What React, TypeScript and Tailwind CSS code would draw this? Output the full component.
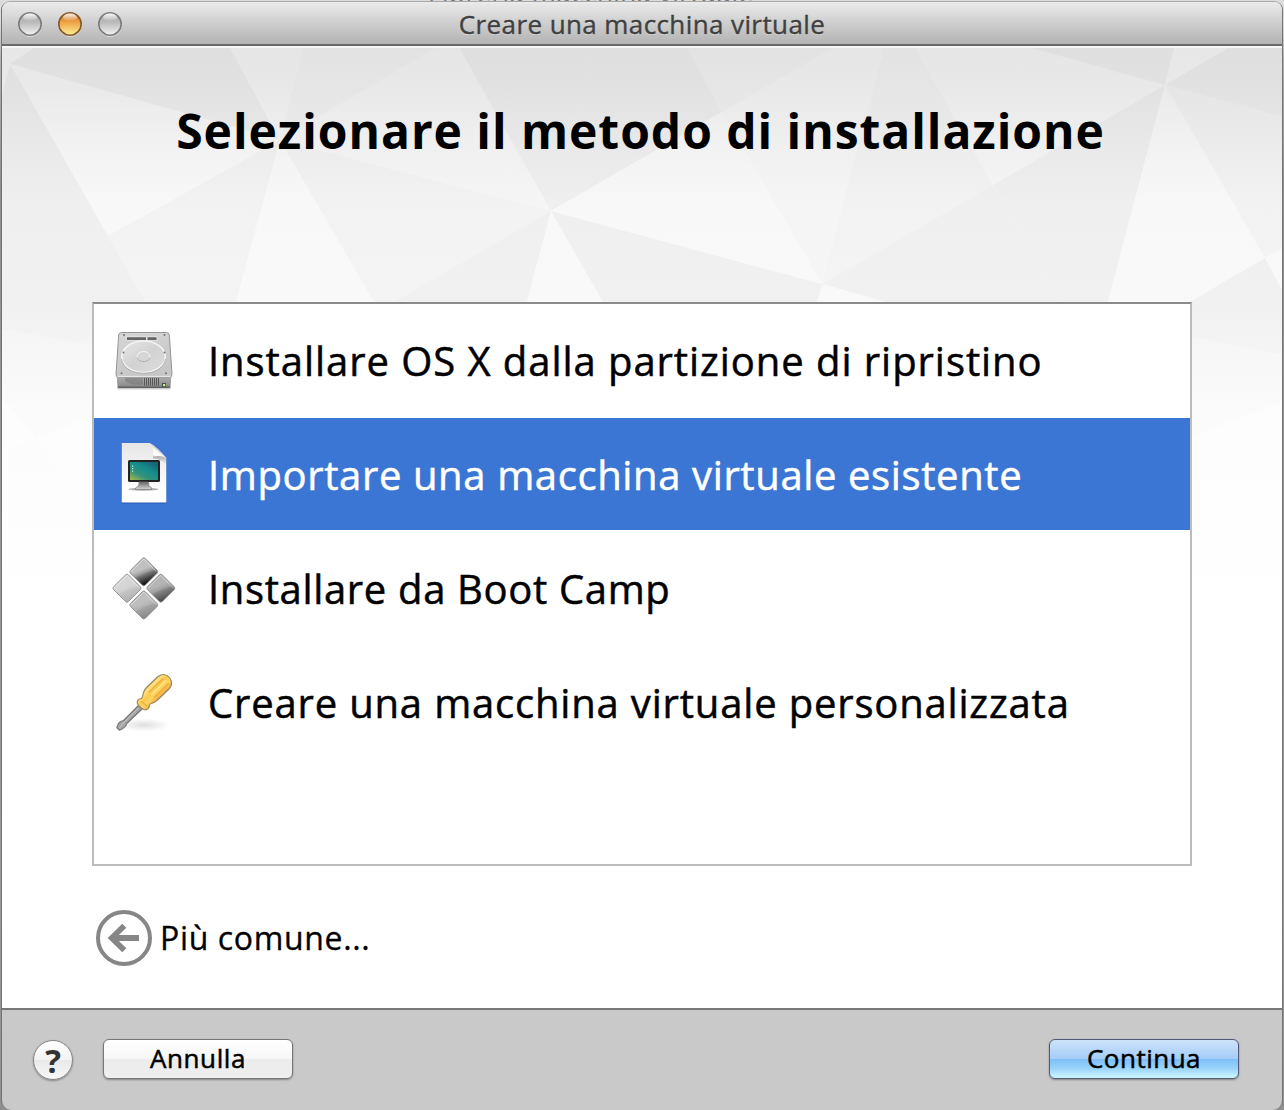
import type { ReactNode } from "react";

type Tone = "light" | "soft" | "mid" | "dark";

// Facets of the paper-fold backdrop; coordinates are in the content pane's own space.
const facets: [Tone, string][] = [
  ["dark", "38,-2 226,-2 278,94 8,18"],
  ["soft", "226,-2 302,-2 278,94"],
  ["mid", "302,-2 440,-2 278,94"],
  ["soft", "440,-2 455,-2 549,165 278,94"],
  ["light", "8,18 278,94 106,190"],
  ["dark", "0,50 8,18 106,190 0,254"],
  ["mid", "106,190 278,94 234,256 144,256"],
  ["dark", "106,190 144,256 0,400 0,252"],
  ["light", "278,94 372,256 234,256"],
  ["mid", "278,94 549,165 394,256 372,256"],
  ["dark", "549,165 525,256 392,256"],
  ["light", "549,165 525,256 603,256"],
  ["dark", "549,165 820,238 815,256 601,256"],
  ["dark", "455,-2 592,-2 549,165"],
  ["dark", "592,-2 683,-2 720,66 549,165"],
  ["mid", "683,-2 838,-2 720,66"],
  ["light", "549,165 720,66 820,238"],
  ["soft", "720,66 838,-2 883,-2 820,238"],
  ["mid", "883,-2 911,-2 991,139 820,238"],
  ["soft", "911,-2 1015,-2 1163,39 991,139"],
  ["dark", "1015,-2 1173,-2 1163,39"],
  ["light", "1173,-2 1233,-2 1163,39"],
  ["dark", "1233,-2 1280,-2 1280,71 1163,39"],
  ["mid", "1163,39 1280,71 1280,203 1263,212"],
  ["dark", "820,238 991,139 1058,256 884,256"],
  ["dark", "991,139 1163,39 1106,256 1058,256"],
  ["light", "1163,39 1263,212 1188,256 1106,256"],
  ["light", "1263,212 1280,203 1280,244"],
  ["dark", "1263,212 1280,244 1280,309 1190,291 1188,256"],
  ["dark", "0,252 90,256 90,299 0,283"],
  ["mid", "0,283 90,299 90,370 35,392 0,352"],
  ["light", "0,352 35,392 0,405"],
  ["soft", "0,405 35,392 90,459 90,504 0,489"],
  ["light", "35,392 90,370 90,459"],
  ["mid", "1190,291 1280,309 1280,355 1190,390"],
];

const toneFill: Record<Tone, string> = {
  light: "url(#tone-light)",
  soft: "url(#tone-soft)",
  mid: "url(#tone-mid)",
  dark: "url(#tone-dark)",
};

const toneStops: Record<Tone, string[]> = {
  light: ["#e7e7e7", "#e9e9e9", "#f1f1f1", "#f8f8f8", "#f9f9f9", "#fdfdfd", "#ffffff"],
  soft: ["#e5e5e5", "#e8e8e8", "#efefef", "#f5f5f5", "#f6f6f6", "#fcfcfc", "#ffffff"],
  mid: ["#e2e2e2", "#e5e5e5", "#ebebeb", "#f2f2f2", "#f4f4f4", "#fbfbfb", "#ffffff"],
  dark: ["#dfdfdf", "#e1e1e1", "#e8e8e8", "#efefef", "#f1f1f1", "#fafafa", "#ffffff"],
};
const offsets = ["0", "0.06", "0.15", "0.25", "0.42", "0.6", "0.95"];

function Backdrop() {
  return (
    <svg className="absolute inset-0" width="1280" height="640" viewBox="0 0 1280 640" aria-hidden="true">
      <defs>
        {(Object.keys(toneStops) as Tone[]).map((t) => (
          <linearGradient key={t} id={`tone-${t}`} gradientUnits="userSpaceOnUse" x1="0" y1="0" x2="0" y2="620">
            {toneStops[t].map((c, i) => (
              <stop key={i} offset={offsets[i]} stopColor={c} />
            ))}
          </linearGradient>
        ))}
      </defs>
      <rect width="1280" height="640" fill="url(#tone-light)" />
      {facets.map(([tone, points], i) => (
        <polygon key={i} points={points} fill={toneFill[tone]} />
      ))}
      <rect width="1280" height="2" fill="#f6f6f6" />
    </svg>
  );
}

function TrafficLight({ amber = false }: { amber?: boolean }) {
  const id = amber ? "amber" : "grey";
  return (
    <svg width="26" height="26" viewBox="0 0 26 26" aria-hidden="true">
      <defs>
        <linearGradient id={`tl-${id}`} x1="0" y1="0" x2="0" y2="1">
          <stop offset="0" stopColor={amber ? "#c66d20" : "#a5a5a5"} />
          <stop offset="0.45" stopColor={amber ? "#f0a648" : "#bcbcbc"} />
          <stop offset="0.75" stopColor={amber ? "#f6d072" : "#dadada"} />
          <stop offset="1" stopColor={amber ? "#f9f29c" : "#f4f4f4"} />
        </linearGradient>
        <linearGradient id={`shine-${id}`} x1="0" y1="0" x2="0" y2="1">
          <stop offset="0" stopColor="#fff" stopOpacity="0.95" />
          <stop offset="1" stopColor="#fff" stopOpacity="0.05" />
        </linearGradient>
      </defs>
      <circle cx="13" cy="14.3" r="11.7" fill="#fff" opacity="0.5" />
      <circle cx="13" cy="13" r="11.2" fill={`url(#tl-${id})`} stroke={amber ? "#85592c" : "#7c7c7c"} strokeWidth="1.6" />
      <ellipse cx="13" cy="6.2" rx="7" ry="3.6" fill={`url(#shine-${id})`} />
    </svg>
  );
}

function DriveIcon() {
  return (
    <svg width="64" height="64" viewBox="0 0 64 64" aria-hidden="true">
      <defs>
        <linearGradient id="drv-top" x1="0" y1="0" x2="0.4" y2="1">
          <stop offset="0" stopColor="#d6d6d6" />
          <stop offset="1" stopColor="#c6c6c6" />
        </linearGradient>
        <linearGradient id="drv-front" x1="0" y1="0" x2="0" y2="1">
          <stop offset="0" stopColor="#b4b4b4" />
          <stop offset="0.8" stopColor="#8f8f8f" />
          <stop offset="1" stopColor="#555" />
        </linearGradient>
        <linearGradient id="drv-disc" x1="0" y1="0" x2="1" y2="1">
          <stop offset="0" stopColor="#e8e8e8" />
          <stop offset="0.5" stopColor="#d2d2d2" />
          <stop offset="1" stopColor="#dedede" />
        </linearGradient>
      </defs>
      <rect x="5" y="58" width="54" height="3.5" rx="1.7" fill="#000" opacity="0.2" />
      <path d="M4.500 47H59.500L58.500 58.500Q58.300 60 56.800 60H7.200Q5.700 60 5.500 58.500Z" fill="url(#drv-front)" />
      <path d="M9.500 4.500H54.500Q57 4.500 57.300 7L60 46Q60 49 58 49H6Q4 49 4 46L6.700 7Q7 4.500 9.500 4.500Z" fill="url(#drv-top)" stroke="#959595" strokeWidth="1" />
      <path d="M5.500 48.400H58.500" stroke="#ededed" strokeWidth="1" />
      <path d="M14.500 8H45.500V13H14.500Z" fill="#dedede" />
      <path d="M15 9.200H34V12H15ZM35.500 9.200H44.500V12H35.500Z" fill="#646464" />
      <circle cx="51.500" cy="32" r="3.500" fill="#dcdcdc" stroke="#bbb" strokeWidth=".7" />
      <ellipse cx="31.500" cy="28.800" rx="21.800" ry="15.800" fill="url(#drv-disc)" stroke="#f6f6f6" strokeWidth="1.500" />
      <path d="M9.500 31C12 50 51 50 53.500 31" fill="none" stroke="#aaa" strokeWidth=".9" />
      <ellipse cx="31.500" cy="28.500" rx="6.500" ry="5" fill="#d6d6d6" stroke="#f6f6f6" />
      <path d="M25 29.500Q27 34 33 33.500Q37 32.800 38 29.500" fill="none" stroke="#a2a2a2" strokeWidth=".9" />
      {[[12, 7], [52.5, 7], [11.5, 24.500], [52.5, 24.500], [9.500, 45.300], [54, 45.300]].map(([x, y]) => (
        <circle key={`${x}-${y}`} cx={x} cy={y} r="1" fill="#747474" />
      ))}
      <path d="M13 50H31V56.500Q20 58 13 53Z" fill="#707070" opacity=".5" />
      {[32.5, 34.500, 36.500, 38.500, 40.500, 42.500, 44.500, 46.500].map((x) => (
        <path key={x} d={`M${x} 50V57.500`} stroke="#565656" strokeWidth="1" />
      ))}
      <rect x="50" y="55" width="4" height="4" fill="#4b4b4b" />
      <rect x="51" y="56" width="2.200" height="2.200" fill="#b7f78b" />
    </svg>
  );
}

function ImportIcon() {
  return (
    <svg width="64" height="64" viewBox="0 0 64 64" aria-hidden="true">
      <defs>
        <linearGradient id="doc" x1="0" y1="0" x2="0" y2="1">
          <stop offset="0" stopColor="#e6e6e6" />
          <stop offset="0.8" stopColor="#ffffff" />
        </linearGradient>
        <linearGradient id="screen" x1="0" y1="1" x2="0.8" y2="0">
          <stop offset="0" stopColor="#a9b94e" />
          <stop offset="0.35" stopColor="#33927c" />
          <stop offset="0.65" stopColor="#168d8b" />
          <stop offset="1" stopColor="#176575" />
        </linearGradient>
        <linearGradient id="curl" gradientUnits="userSpaceOnUse" x1="42" y1="14" x2="47.500" y2="7.500">
          <stop offset="0" stopColor="#ffffff" />
          <stop offset="0.6" stopColor="#fafafa" />
          <stop offset="1" stopColor="#bdbdbd" />
        </linearGradient>
        <linearGradient id="fold-shade" x1="0" y1="0" x2="0" y2="1">
          <stop offset="0" stopColor="#555" stopOpacity="0.5" />
          <stop offset="1" stopColor="#555" stopOpacity="0" />
        </linearGradient>
        <linearGradient id="stand" x1="0" y1="0" x2="0" y2="1">
          <stop offset="0" stopColor="#666" />
          <stop offset="1" stopColor="#d8d8d8" />
        </linearGradient>
      </defs>
      <path d="M9 1.500H38L54.500 17V61.500H9Z" fill="#123a80" opacity="0.45" />
      <path d="M9.700 1H37Q41 1.500 54.300 16V60.500H9.700Z" fill="url(#doc)" />
      <path d="M41 13H50L54.300 16.500V22Q48 17 41 16.500Z" fill="url(#fold-shade)" />
      <path d="M37.500 1Q42.500 5 41.300 14.500Q49 12.800 54.500 16.300Q45 4.500 37.500 1Z" fill="url(#curl)" />
      <rect x="16" y="18" width="32" height="22" rx="1.500" fill="#202224" />
      <rect x="18" y="20" width="28" height="18" fill="url(#screen)" />
      <path d="M20 23.500h1.200v1.200h-1.200zM20 26h1.200v1.200h-1.200zM20 28.500h1.200v1.200h-1.200z" fill="#d2f4df" />
      <ellipse cx="31.500" cy="47.200" rx="15" ry="1.500" fill="#777" opacity=".6" />
      <path d="M27 40H36.500Q36 44 39.500 46V47.500H23.500V46Q28 44 27 40Z" fill="url(#stand)" stroke="#777" strokeWidth=".7" />
    </svg>
  );
}

function BootCampIcon() {
  const tiles: [number, number, string][] = [
    [31.8, 15.800, "bc-black"],
    [15, 32.200, "bc-pale"],
    [48.800, 32.200, "bc-dark"],
    [31.8, 49, "bc-mid"],
  ];
  const ends: [string, string, string][] = [
    ["bc-black", "#b6b6b6", "#141414"],
    ["bc-pale", "#d0d0d0", "#b2b2b2"],
    ["bc-dark", "#a8a8a8", "#4e4e4e"],
    ["bc-mid", "#b4b4b4", "#8a8a8a"],
  ];
  return (
    <svg width="64" height="64" viewBox="0 0 64 64" aria-hidden="true">
      <defs>
        {ends.map(([id, a, b]) => (
          <linearGradient key={id} id={id} x1="0.3" y1="0.1" x2="0.62" y2="0.9">
            <stop offset="0" stopColor={a} />
            <stop offset="0.4" stopColor={a} />
            <stop offset="1" stopColor={b} />
          </linearGradient>
        ))}
      </defs>
      {tiles.map(([x, y, id]) => (
        <g key={id} transform={`translate(${x} ${y})`}>
          <path d="M-1.500-13.300Q0-14.800 1.500-13.300L13.300-1.500Q14.800 0 13.300 1.500L1.500 13.300Q0 14.800-1.500 13.300L-13.300 1.500Q-14.800 0-13.300-1.500Z" fill={`url(#${id})`} stroke="#8f8f8f" strokeWidth=".9" />
          <path d="M-12.800 0L0-12.800L12.800 0" fill="none" stroke="#fff" strokeOpacity=".5" strokeWidth=".9" />
          <path d="M0-13.500L11.500-2Q2 0-8 6L-14 0Z" fill="#fff" opacity=".14" />
        </g>
      ))}
    </svg>
  );
}

function ScrewdriverIcon() {
  return (
    <svg width="64" height="64" viewBox="0 0 64 64" aria-hidden="true">
      <defs>
        <linearGradient id="handle" gradientUnits="userSpaceOnUse" x1="34" y1="13" x2="49" y2="28">
          <stop offset="0" stopColor="#f3c750" />
          <stop offset="0.3" stopColor="#ffe07a" />
          <stop offset="0.5" stopColor="#fbc850" />
          <stop offset="0.7" stopColor="#ffd560" />
          <stop offset="1" stopColor="#f2a238" />
        </linearGradient>
        <radialGradient id="sd-shadow">
          <stop offset="0" stopColor="#000" stopOpacity="0.13" />
          <stop offset="1" stopColor="#000" stopOpacity="0" />
        </radialGradient>
      </defs>
      <ellipse cx="32" cy="55" rx="26" ry="6.500" fill="url(#sd-shadow)" />
      <path d="M26.500 35.500L30 39L14.800 53.500Q14 57.500 7.500 60.300L4.800 57.500Q6.500 51 11.500 50.500Z" fill="#a3a3a3" stroke="#777" strokeWidth="1.100" strokeLinejoin="round" />
      <path d="M27 37.500L12 52.500L7.500 57.500" fill="none" stroke="#cdcdcd" strokeWidth="1" />
      <path d="M28 37Q24.300 33.500 25.500 31Q26.500 28.500 29.500 28.500Q31 26 31.500 22.500Q32.500 19.500 35 17L46 6.500Q49 4.300 52 4.500Q55.500 5 57.800 8Q60 11 59.500 14.500Q59 17 57 19L45 30.500Q42.500 32.500 39.500 33.500Q37.500 34 37.300 35.500Q37.500 38 35.500 39Q33.500 40.500 31.500 39.500Z" fill="url(#handle)" stroke="#998868" strokeWidth="1.200" />
      <path d="M37 22L50.500 9M42.500 27L56 14" stroke="#e8952c" strokeOpacity=".6" strokeWidth="1.600" strokeLinecap="round" />
      <path d="M40 24L53.500 11" stroke="#ffe98c" strokeWidth="1.500" strokeLinecap="round" />
      <path d="M29.500 31.500L35 36" stroke="#eaa137" strokeOpacity=".7" strokeWidth="1.300" />
    </svg>
  );
}

function Row({ icon, spacing, selected = false, children }: { icon: ReactNode; spacing: string; selected?: boolean; children: ReactNode }) {
  return (
    <li className={`flex h-28 items-center gap-8 pl-[18px] ${selected ? "bg-[#3c76d4] text-white" : "text-black"}`}>
      <span className="size-16 shrink-0">{icon}</span>
      <span className={`whitespace-nowrap pt-px text-[40px] leading-none [-webkit-text-stroke:0.5px_currentColor] ${spacing}`}>{children}</span>
    </li>
  );
}

export default function App() {
  return (
    <div className="relative flex h-[1110px] w-[1284px] flex-col overflow-hidden bg-[linear-gradient(#dcdcdc_0,#dcdcdc_20px,#b0b0b0_60px,#8f8f8f_180px,#999_900px,#8f8f8f)] px-[1px] pt-[1px] font-['Open_Sans',sans-serif]">
      <div className="absolute left-[428px] top-0 h-[2px] w-[340px] overflow-hidden">
        <span className="absolute bottom-[-8px] left-0 whitespace-nowrap text-[26px] leading-[34px] tracking-[0.45px] text-[#777]">Libreria macchina virtuale</span>
      </div>
      <main className="relative flex min-h-0 flex-1 flex-col overflow-hidden rounded-t-[9px] rounded-b-[10px] border-x border-t border-x-[#747474] border-t-[#a8a8a8]">
        <header className="relative flex h-[44px] shrink-0 items-center justify-center border-b-2 border-[#69696b] bg-linear-to-b from-[#ebebeb] to-[#b3b3b3]">
          <div className="absolute left-[15px] top-[9px] flex gap-[14px]">
            <TrafficLight />
            <TrafficLight amber />
            <TrafficLight />
          </div>
          <h1 className="pt-px text-[26px] leading-none tracking-[0.4px] text-[#404040] [-webkit-text-stroke:0.4px_currentColor] [text-shadow:0_1px_0_rgba(255,255,255,0.5)]">Creare una macchina virtuale</h1>
        </header>
        <section className="relative flex min-h-0 flex-1 flex-col bg-white px-[90px]">
          <Backdrop />
          <h2 className="relative mt-[53px] h-[64px] whitespace-nowrap pr-[3px] text-center text-[48px] font-bold leading-[64px] tracking-[0.95px] text-black">Selezionare il metodo di installazione</h2>
          <ul className="relative mt-[139px] flex h-[564px] flex-col gap-[2px] border-2 border-[#bcbcbc] border-t-[#8b8b8b] bg-white">
            <Row icon={<DriveIcon />} spacing="tracking-[0.94px]">Installare OS X dalla partizione di ripristino</Row>
            <Row icon={<ImportIcon />} spacing="tracking-[0.62px]" selected>Importare una macchina virtuale esistente</Row>
            <Row icon={<BootCampIcon />} spacing="tracking-[0.65px]">Installare da Boot Camp</Row>
            <Row icon={<ScrewdriverIcon />} spacing="tracking-[0.82px]">Creare una macchina virtuale personalizzata</Row>
          </ul>
          <button className="relative mt-[44px] flex items-center gap-[8px] self-start pl-1">
            <svg width="56" height="56" viewBox="0 0 56 56" fill="none" stroke="#868686" aria-hidden="true">
              <circle cx="28" cy="28" r="26" strokeWidth="4" />
              <path d="M28.300 15.700L15.800 28L28.300 40.300M17 28H43" strokeWidth="5.800" />
            </svg>
            <span className="text-[32px] leading-none tracking-[0.65px] [-webkit-text-stroke:0.3px_currentColor]">Più comune...</span>
          </button>
        </section>
        <footer className="flex h-[102px] shrink-0 items-center border-t-2 border-[#777] bg-[#c9c9c9] pl-[31px] pr-[43px]">
          <button className="flex size-10 items-center justify-center rounded-full border border-[#858585] bg-[linear-gradient(#fff,#f3f3f3_50%,#e9e9e9_50%,#f8f8f8)] text-[33px] font-bold leading-none text-[#333] shadow-[0_1px_2px_rgba(0,0,0,0.35)]">?</button>
          <button className="ml-[30px] mt-[-2px] flex h-[40px] w-[190px] items-center justify-center rounded-[6px] border border-[#777] bg-[linear-gradient(#fff,#f6f6f6_50%,#ececec_50%,#eeeeee)] pb-[2px] text-[26px] leading-none tracking-[0.6px] shadow-[0_1px_2px_rgba(0,0,0,0.35)] [-webkit-text-stroke:0.5px_currentColor]">Annulla</button>
          <button className="ml-auto mt-[-2px] flex h-[40px] w-[190px] items-center justify-center rounded-[6px] border border-[#545878] bg-[linear-gradient(#cfe3fa,#a4cdf7_49%,#7fbdf8_50%,#9ad4fb_75%,#cdf7ff)] pb-[2px] text-[26px] leading-none tracking-[0.5px] shadow-[0_1px_2px_rgba(0,0,0,0.35)] [-webkit-text-stroke:0.5px_currentColor]">Continua</button>
        </footer>
      </main>
    </div>
  );
}
